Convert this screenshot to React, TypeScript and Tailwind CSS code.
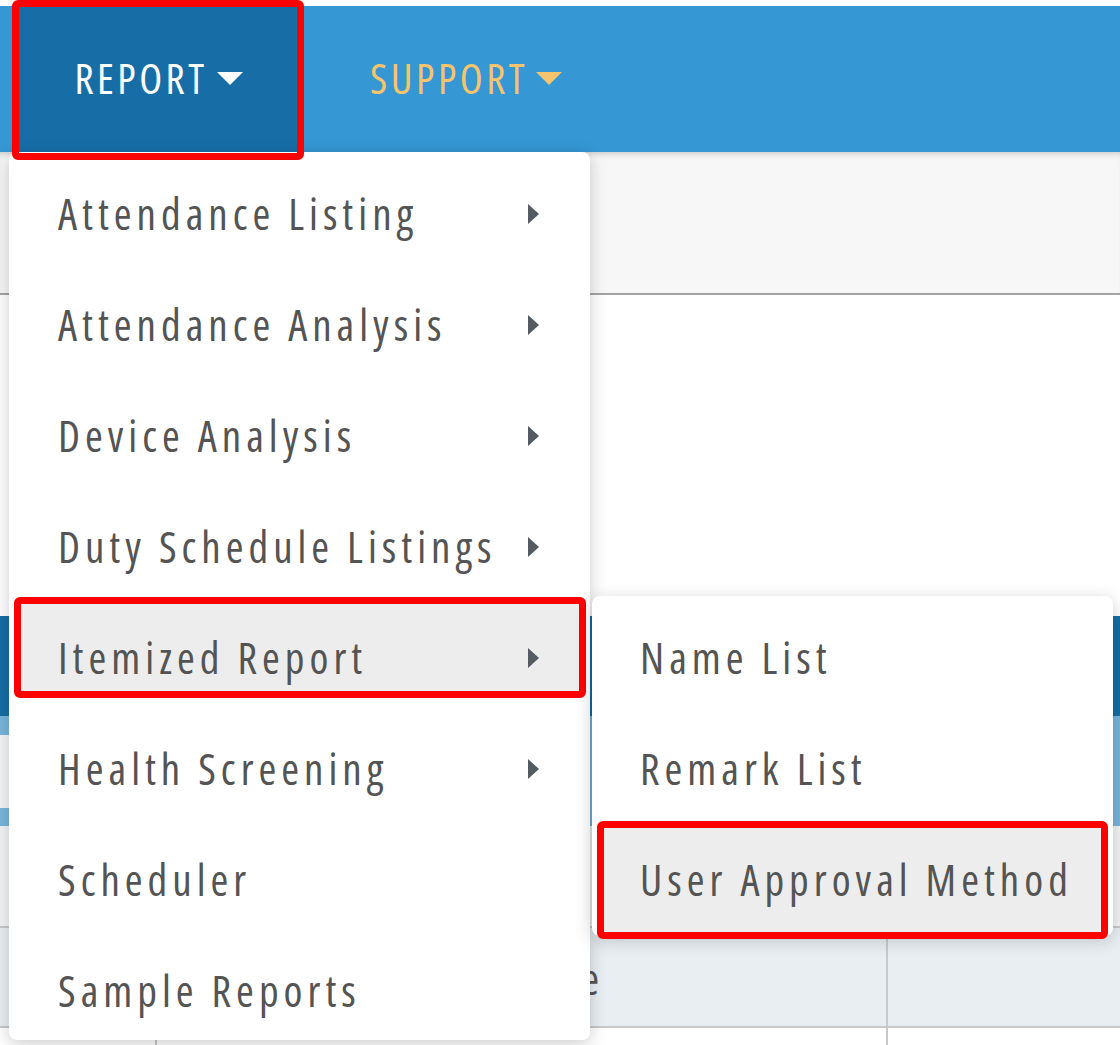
const FONT = { fontFamily: "'Open Sans', 'Liberation Sans', sans-serif", fontStretch: "87.5%" } as const;

function CaretRight() {
  return (
    <svg width="13" height="22" viewBox="0 0 13 22" className="shrink-0">
      <path d="M1 1 L12 11 L1 21 Z" fill="#555b63" />
    </svg>
  );
}

function CaretDown({ color }: { color: string }) {
  return (
    <svg width="26" height="13" viewBox="0 0 26 13" className="shrink-0">
      <path d="M0 0 L26 0 L13 13 Z" fill={color} />
    </svg>
  );
}

const mainItems = [
  { label: "Attendance Listing", sub: true },
  { label: "Attendance Analysis", sub: true },
  { label: "Device Analysis", sub: true },
  { label: "Duty Schedule Listings", sub: true },
  { label: "Itemized Report", sub: true, active: true },
  { label: "Health Screening", sub: true },
  { label: "Scheduler", sub: false },
  { label: "Sample Reports", sub: false },
];

const subItems = [
  { label: "Name List" },
  { label: "Remark List" },
  { label: "User Approval Method", active: true },
];

export default function App() {
  return (
    <div className="relative w-[1120px] h-[1045px] overflow-hidden bg-white" style={FONT}>
      {/* top white strip */}
      <div className="h-[6px] bg-white" />
      {/* nav bar */}
      <div className="h-[146px] bg-[#3597d3] flex items-stretch">
        <div className="ml-[17px] w-[283px] bg-[#176ea7] flex items-center justify-center gap-[9px] text-white text-[42px] font-medium tracking-[3.5px] pb-[2px]">
          <span className="leading-none">REPORT</span>
          <CaretDown color="#ffffff" />
        </div>
        <div className="ml-[70px] flex items-center gap-[8px] text-[#f6c46d] text-[42px] font-medium tracking-[3.5px] pb-[2px]">
          <span className="leading-none">SUPPORT</span>
          <CaretDown color="#f6c46d" />
        </div>
      </div>
      {/* grey toolbar area */}
      <div className="h-[143px] bg-[#f7f7f7] border-b-2 border-[#a3a3a3] shadow-[inset_0_6px_6px_-4px_rgba(0,0,0,0.18)]" />
      {/* white content */}
      <div className="h-[321px] bg-white" />
      {/* dark blue panel header */}
      <div className="h-[100px] bg-[#176ea7]" />
      {/* light blue band */}
      <div className="h-[110px] flex bg-[#7ab6dd]">
        <div className="w-[10px] flex flex-col">
          <div className="h-[19px] bg-[#7ab6dd]" />
          <div className="h-[73px] bg-[#f4f6f8]" />
          <div className="h-[18px] bg-[#7ab6dd]" />
        </div>
        <div className="flex-1" />
      </div>
      {/* light area */}
      <div className="h-[102px] bg-[#f3f4f5] border-b-2 border-[#c9c9c9]" />
      {/* table header */}
      <div className="h-[100px] flex bg-[#e8eef2] border-b-2 border-[#c9c9c9] text-[#545454] text-[43px] tracking-[5px]">
        <div className="w-[157px] border-r border-[#c9c9c9]" />
        <div className="w-[731px] border-r-2 border-[#c9c9c9] flex items-center justify-end pr-[282px] pt-[4px]">
          <span>Name</span>
        </div>
        <div className="flex-1" />
      </div>
      <div className="flex h-[20px] bg-white">
        <div className="w-[157px] border-r-2 border-[#c9c9c9]" />
        <div className="w-[731px] border-r-2 border-[#c9c9c9]" />
      </div>

      {/* main dropdown */}
      <div className="absolute left-[9px] top-[152px] w-[581px] bg-white rounded-[8px] shadow-[0_4px_18px_rgba(0,0,0,0.2)]">
        {mainItems.map((it) => (
          <div key={it.label} className="relative h-[111px]">
            {it.active && (
              <div className="absolute left-[5px] top-[1px] w-[572px] h-[101px] bg-[#ededed] border-[7px] border-[#ff0000] rounded-[6px]" />
            )}
            <div className="relative h-full flex items-center justify-between pl-[49px] pr-[50px] pt-[12px] text-[#545454] text-[43px] tracking-[5px]">
              <span className="leading-none whitespace-nowrap">{it.label}</span>
              {it.sub && <CaretRight />}
            </div>
          </div>
        ))}
      </div>

      {/* sub menu */}
      <div className="absolute left-[592px] top-[596px] w-[521px] pb-[7px] bg-white rounded-[8px] shadow-[0_4px_18px_rgba(0,0,0,0.2)]">
        {subItems.map((it) => (
          <div key={it.label} className="relative h-[111px]">
            {it.active && (
              <div className="absolute left-[5px] top-[3px] w-[511px] h-[118px] bg-[#ededed] border-[7px] border-[#ff0000] rounded-[6px]" />
            )}
            <div className="relative h-full flex items-center pl-[48px] pt-[12px] text-[#545454] text-[43px] tracking-[5px]">
              <span className="leading-none whitespace-nowrap">{it.label}</span>
            </div>
          </div>
        ))}
      </div>

      {/* annotation box around REPORT tab (drawn on top) */}
      <div className="absolute left-[12px] top-0 w-[292px] h-[160px] border-[7px] border-[#ff0000] rounded-[6px]" />
    </div>
  );
}
